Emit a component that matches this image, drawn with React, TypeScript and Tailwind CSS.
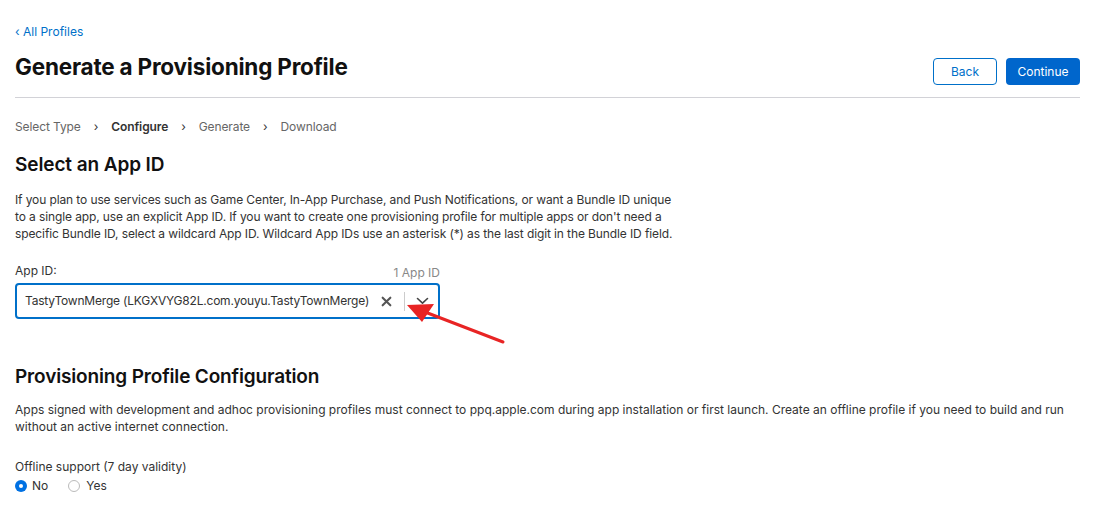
import React from "react";

export default function App() {
  return (
    <div className="relative w-[1116px] h-[524px] bg-white overflow-hidden text-[#333]" style={{ fontFamily: "Inter, 'Noto Sans', Arial, sans-serif" }}>
      <div className="px-[15px] pr-[36px]">
        <div className="pt-[25px] text-[12px] leading-[14px] text-[#0070c9]">‹ All Profiles</div>
        <div className="flex items-end justify-between mt-[15px] pb-[12px] border-b border-[#d2d2d7]">
          <h1 className="text-[22.5px] leading-[26px] font-bold text-[#111] tracking-[-0.2px] mb-[5px]">Generate a Provisioning Profile</h1>
          <div className="flex gap-[9px]">
            <button className="w-[64px] h-[27px] rounded-[4px] border border-[#0070c9] text-[12px] text-[#0070c9] bg-white">Back</button>
            <button className="w-[74px] h-[27px] rounded-[4px] bg-[#0066cc] text-[12px] text-white">Continue</button>
          </div>
        </div>
        <div className="flex items-center mt-[22px] text-[12px] leading-[14px] text-[#666] tracking-[-0.1px]">
          <span>Select Type</span>
          <span className="mx-[13px] text-[#333]">›</span>
          <span className="font-semibold text-[#333]">Configure</span>
          <span className="mx-[13px] text-[#333]">›</span>
          <span>Generate</span>
          <span className="mx-[13px] text-[#333]">›</span>
          <span>Download</span>
        </div>
        <h2 className="mt-[19px] text-[19px] leading-[24px] font-semibold text-[#111] tracking-[-0.1px]">Select an App ID</h2>
        <p className="mt-[14px] w-[700px] text-[12px] leading-[17px] text-[#333] tracking-[-0.11px]">
          If you plan to use services such as Game Center, In-App Purchase, and Push Notifications, or want a Bundle ID unique<br />
          to a single app, use an explicit App ID. If you want to create one provisioning profile for multiple apps or don't need a<br />
          specific Bundle ID, select a wildcard App ID. Wildcard App IDs use an asterisk (*) as the last digit in the Bundle ID field.
        </p>
        <div className="w-[425px] mt-[22px]">
          <div className="flex justify-between items-end text-[12px] leading-[14px]">
            <span className="text-[#333]">App ID:</span>
            <span className="text-[#888] translate-y-[2px]">1 App ID</span>
          </div>
          <div className="mt-[5px] h-[36px] rounded-[4px] border-2 border-[#0070c9] flex items-center pl-[8px] pr-[9px] text-[12px]">
            <span className="flex-1 text-[#333] truncate tracking-[-0.2px]">TastyTownMerge (LKGXVYG82L.com.youyu.TastyTownMerge)</span>
            <svg width="11" height="11" viewBox="0 0 10 10" className="mr-[12px]"><path d="M1.5 1.5 L8.5 8.5 M8.5 1.5 L1.5 8.5" stroke="#555" strokeWidth="1.9" strokeLinecap="round" /></svg>
            <div className="w-px h-[19px] bg-[#ccc] mr-[11px]" />
            <svg width="13" height="8" viewBox="0 0 13 8"><path d="M1.5 1.5 L6.5 6.2 L11.5 1.5" stroke="#444" strokeWidth="1.6" fill="none" strokeLinecap="round" strokeLinejoin="round" /></svg>
          </div>
        </div>
        <h2 className="mt-[46px] text-[19px] leading-[24px] font-semibold text-[#111] tracking-[-0.15px]">Provisioning Profile Configuration</h2>
        <p className="mt-[12px] text-[12px] leading-[17px] text-[#333]">
          Apps signed with development and adhoc provisioning profiles must connect to ppq.apple.com during app installation or first launch. Create an offline profile if you need to build and run<br />
          without an active internet connection.
        </p>
        <div className="mt-[25px] text-[12px] leading-[14px] text-[#333]">Offline support (7 day validity)</div>
        <div className="mt-[5px] flex items-center text-[12px] leading-[14px] text-[#333]">
          <span className="w-[12px] h-[12px] rounded-full bg-[#0071e3] flex items-center justify-center mr-[5px]"><span className="w-[4px] h-[4px] rounded-full bg-white" /></span>
          <span>No</span>
          <span className="ml-[20px] w-[12px] h-[12px] rounded-full border border-[#bbb] mr-[6px]" />
          <span>Yes</span>
        </div>
      </div>
      <svg className="absolute left-0 top-0 pointer-events-none" width="1116" height="524">
        <line x1="503" y1="342" x2="425" y2="312" stroke="#e82424" strokeWidth="3" strokeLinecap="round" />
        <polygon points="407,305 434,304 422,322" fill="#e82424" />
      </svg>
    </div>
  );
}
